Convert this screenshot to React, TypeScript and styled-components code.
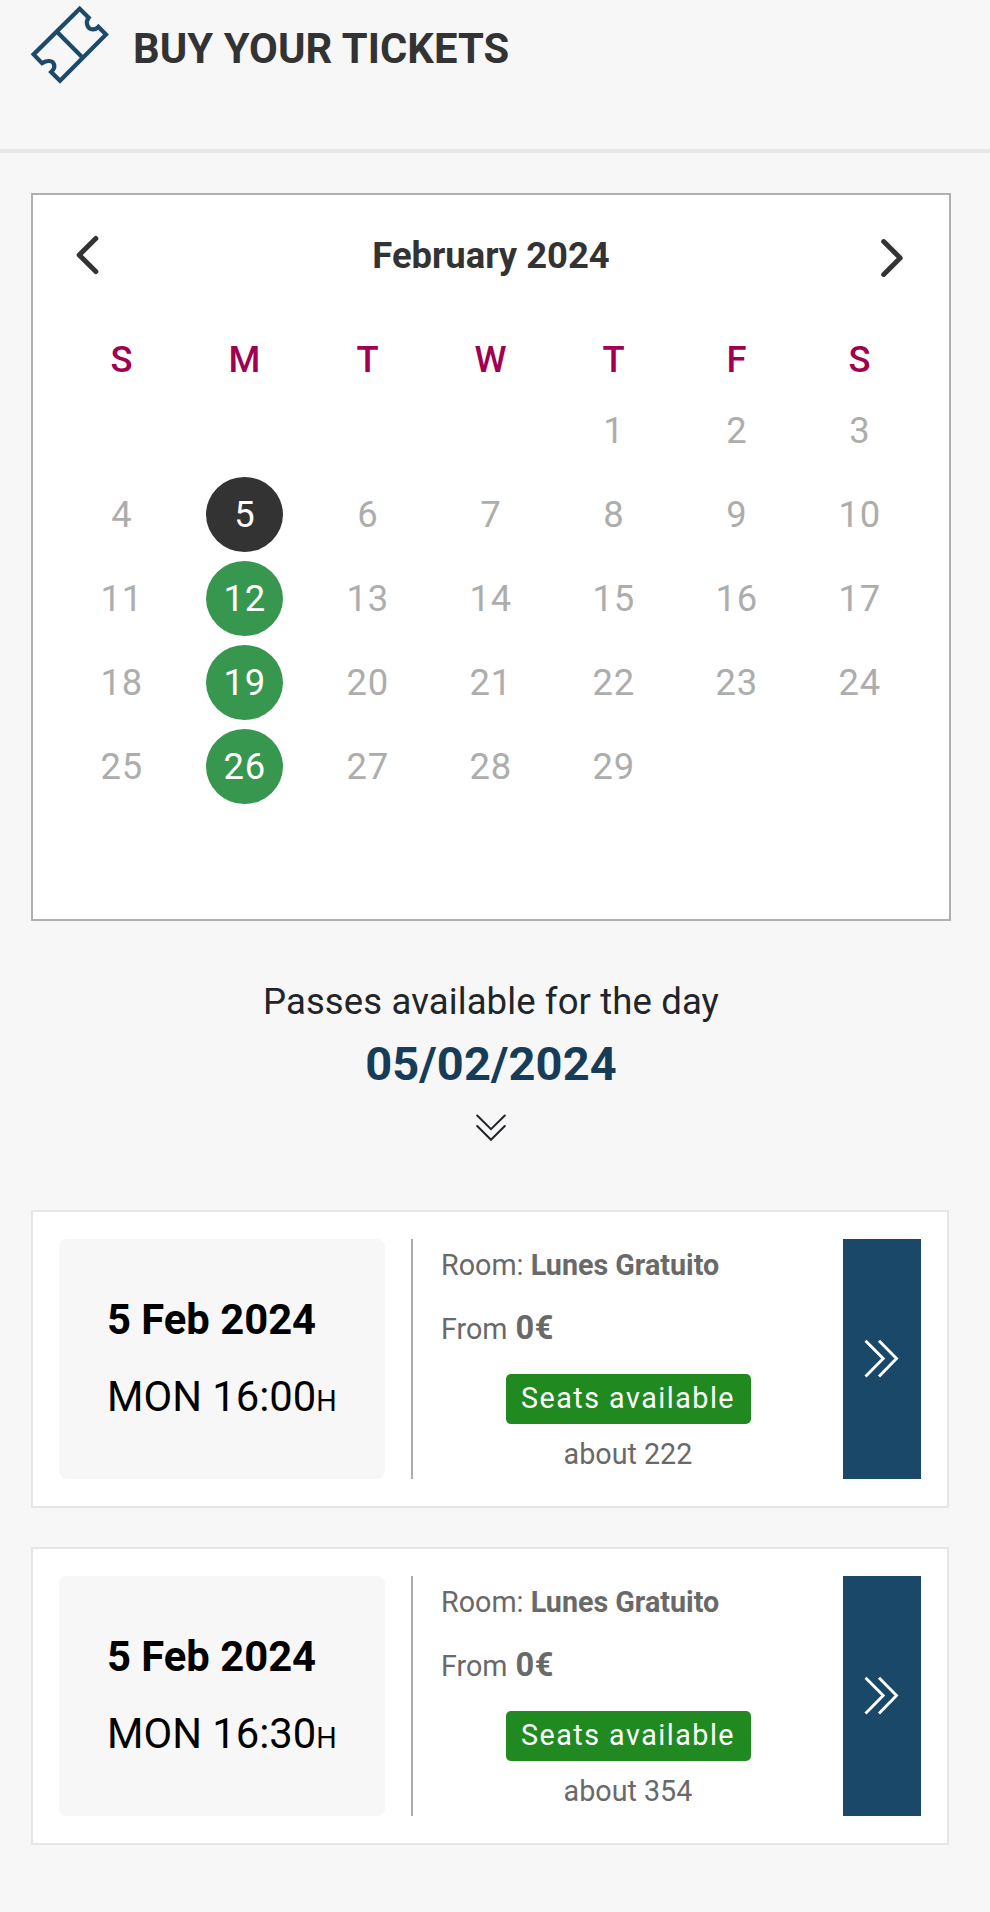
import React from "react";
import styled, { createGlobalStyle } from "styled-components";

const GlobalStyle = createGlobalStyle`
  *, *::before, *::after { box-sizing: border-box; }
  body { margin: 0; background: #f7f7f7; font-family: Roboto, "Liberation Sans", sans-serif; color: #212529; }
`;

const Page = styled.main`
  width: 990px;
  height: 1912px;
  overflow: hidden;
  background: #f7f7f7;
`;

const Header = styled.header`
  display: flex;
  align-items: flex-start;
  height: 153px;
  padding: 5px 30px 0;
  border-bottom: 4px solid #e7e7e7;
`;

const Title = styled.h1`
  margin: 18px 0 0 23px;
  font-size: 41.75px;
  line-height: 52px;
  font-weight: 700;
  letter-spacing: 0.08px;
  color: #333;
`;

const Calendar = styled.section`
  width: 920px;
  height: 728px;
  margin: 40px 0 0 31px;
  padding: 0 43px;
  border: 2px solid #b0b0b0;
  background: #fff;
`;

const MonthBar = styled.div`
  display: flex;
  align-items: center;
  justify-content: space-between;
  height: 122px;
`;

const MonthName = styled.h2`
  margin: 0;
  font-size: 36.4px;
  line-height: 44px;
  font-weight: 700;
  color: #333;
`;

const Arrow = styled.button<{ $drop?: boolean }>`
  display: flex;
  margin-top: ${(p) => (p.$drop ? 3 : -2)}px;
  padding: 0;
  border: 0;
  background: none;
  cursor: pointer;

  svg { overflow: visible; }
`;

const WeekRow = styled.div`
  display: grid;
  grid-template-columns: repeat(7, 123px);
  margin-left: -16px;
  justify-items: center;
`;

const Weekday = styled.span`
  margin-top: 20px;
  height: 56px;
  font-size: 36.4px;
  line-height: 46px;
  font-weight: 500;
  color: #a0004f;
`;

type DayState = "off" | "open" | "selected";

const Day = styled.span<{ $state: DayState }>`
  display: flex;
  align-items: center;
  justify-content: center;
  width: 77px;
  height: 75px;
  margin-bottom: 9px;
  padding-left: 0.7px;
  border-radius: 50%;
  font-size: 36.4px;
  letter-spacing: 0.8px;
  color: ${(p) => (p.$state === "off" ? "#adadad" : "#fff")};
  background: ${(p) =>
    p.$state === "open" ? "#37974f" : p.$state === "selected" ? "#333" : "transparent"};
`;

const Summary = styled.section`
  display: flex;
  flex-direction: column;
  align-items: center;
  width: 920px;
  height: 289px;
  margin-left: 31px;
  padding-top: 57px;
`;

const SummaryText = styled.p`
  margin: 0;
  font-size: 36.5px;
  line-height: 48px;
  letter-spacing: 0.12px;
`;

const SummaryDate = styled.p`
  margin: 8px 0 0;
  font-size: 47px;
  line-height: 60px;
  font-weight: 700;
  letter-spacing: 0.1px;
  color: #163c57;
`;

const DownMark = styled.svg`
  margin-top: 20px;
`;

const Card = styled.article`
  display: flex;
  width: 918px;
  height: 298px;
  margin: 0 0 39px 31px;
  padding: 27px 26px;
  border: 2px solid #e6e6e6;
  background: #fff;
`;

const DateBox = styled.div`
  width: 326px;
  height: 240px;
  padding: 55px 0 0 48px;
  border-radius: 8px;
  background: #f7f7f7;
  color: #000;
  white-space: nowrap;
`;

const CardDate = styled.p`
  margin: 0;
  font-size: 41.75px;
  line-height: 52px;
  font-weight: 700;
`;

const CardTime = styled.p`
  margin: 25px 0 0;
  font-size: 41.75px;
  line-height: 52px;

  small { font-size: 28.7px; }
`;

const Details = styled.div`
  display: flex;
  flex-direction: column;
  width: 431px;
  height: 240px;
  margin-left: 26px;
  padding: 8px 27px 0 28px;
  border-left: 2px solid #adadad;
  font-size: 28.7px;
  line-height: 36px;
  color: #696969;
`;

const Room = styled.p`
  margin: 0;
`;

const Price = styled.p`
  margin: 27px 0 0;

  strong { margin-left: 1px; font-size: 32.6px; letter-spacing: 0.6px; }
`;

const Seats = styled.div`
  display: flex;
  flex-direction: column;
  align-items: center;
  width: 374px;
  margin-top: 27px;
`;

const Badge = styled.span`
  width: 245px;
  height: 50px;
  border-radius: 5px;
  background: #208a20;
  color: #fff;
  line-height: 48px;
  letter-spacing: 1.5px;
  text-align: center;
`;

const About = styled.span`
  margin-top: 12px;
`;

const Go = styled.button`
  display: flex;
  align-items: center;
  justify-content: center;
  width: 78px;
  height: 240px;
  margin-left: auto;
  padding: 0;
  border: 0;
  background: #194868;
  cursor: pointer;
`;

const Ticket = () => (
  <svg width="80" height="82" viewBox="0 0 80 82" fill="none" stroke="#1d4a6a" strokeWidth="4.2">
    <path d="M49.7 3.8L58.7 12.7C55.2 17 57 24.1 62.8 24.3C65 24.4 66.8 23.7 68.4 21.9L76 29.6L30 75.8L21.2 67C26.5 62.3 24.5 56.2 19.3 56C16.5 55.9 14.3 56.7 12 58.1L3.6 49.4Z" />
    <path d="M27.2 27L52.5 52.5" />
  </svg>
);

const Chevron = ({ flip }: { flip?: boolean }) => (
  <svg width="24" height="38" viewBox="0 0 24 38" fill="none" stroke="#333" strokeWidth="5" strokeLinecap="round" strokeLinejoin="round">
    <path d={flip ? "M1.7 2.6L18.2 19L1.7 35.4" : "M19.8 2.4L3.2 19L19.8 35.6"} />
  </svg>
);

const weekdays = ["S", "M", "T", "W", "T", "F", "S"];
const openDays = [12, 19, 26];
const cells: (number | null)[] = [null, null, null, null, ...Array.from({ length: 29 }, (_, i) => i + 1)];

const stateOf = (day: number | null): DayState =>
  day === 5 ? "selected" : day !== null && openDays.includes(day) ? "open" : "off";

const passes = [
  { time: "16:00", seats: 222 },
  { time: "16:30", seats: 354 },
];

export default function App() {
  return (
    <Page>
      <GlobalStyle />
      <Header>
        <Ticket />
        <Title>BUY YOUR TICKETS</Title>
      </Header>
      <Calendar>
        <MonthBar>
          <Arrow aria-label="Previous month"><Chevron /></Arrow>
          <MonthName>February 2024</MonthName>
          <Arrow aria-label="Next month" $drop><Chevron flip /></Arrow>
        </MonthBar>
        <WeekRow>
          {weekdays.map((w, i) => <Weekday key={i}>{w}</Weekday>)}
          {cells.map((d, i) => <Day key={i} $state={stateOf(d)}>{d}</Day>)}
        </WeekRow>
      </Calendar>
      <Summary>
        <SummaryText>Passes available for the day</SummaryText>
        <SummaryDate>05/02/2024</SummaryDate>
        <DownMark width="30" height="28" viewBox="0 0 30 28" fill="none" stroke="#212529" strokeWidth="2" strokeLinecap="round">
          <path d="M1.2 1.5L15 15.2 28.8 1.5M1.2 12L15 25.8 28.8 12" />
        </DownMark>
      </Summary>
      {passes.map((p) => (
        <Card key={p.time}>
          <DateBox>
            <CardDate>5 Feb 2024</CardDate>
            <CardTime>MON {p.time}<small>H</small></CardTime>
          </DateBox>
          <Details>
            <Room>Room: <strong>Lunes Gratuito</strong></Room>
            <Price>From <strong>0€</strong></Price>
            <Seats>
              <Badge>Seats available</Badge>
              <About>about {p.seats}</About>
            </Seats>
          </Details>
          <Go aria-label="Select this pass">
            <svg width="36" height="40" viewBox="0 0 36 40" fill="none" stroke="#fff" strokeWidth="2.9">
              <path d="M1.5 1.7L19.2 19.6L1.5 37.5M15 1.7L32.5 19.6L15 37.5" />
            </svg>
          </Go>
        </Card>
      ))}
    </Page>
  );
}
